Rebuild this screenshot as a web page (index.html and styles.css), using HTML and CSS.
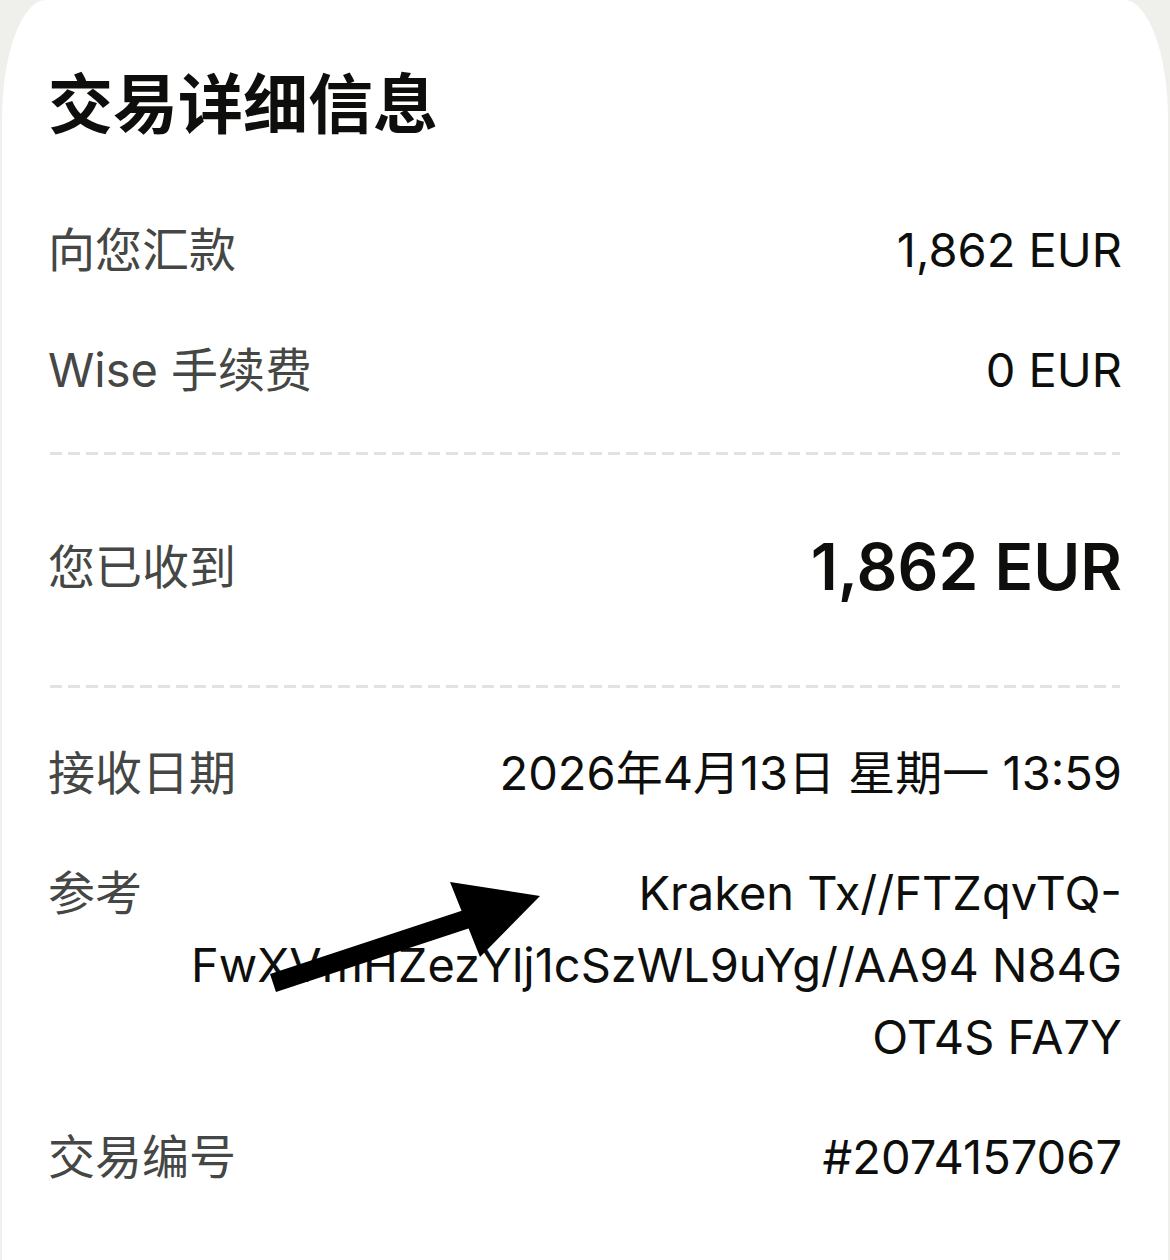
FILE: index.html
```html
<!DOCTYPE html>
<html>
<head>
	<title>交易详细信息</title>
	<meta charset="utf-8">
	<link rel="stylesheet" href="styles.css">
</head>
<body>
  <div class="card">
  	<h1 class="title">交易详细信息</h1>
  	<div class="row">
  		<div class="label">向您汇款</div>
  		<div class="value">1,862 EUR</div>
  	</div>
  	<div class="row">
  		<div class="label">Wise 手续费</div>
  		<div class="value">0 EUR</div>
  	</div>
  	<div class="divider"></div>
  	<div class="row total">
  		<div class="label">您已收到</div>
  		<div class="value">1,862 EUR</div>
  	</div>
  	<div class="divider"></div>
  	<div class="row">
  		<div class="label">接收日期</div>
  		<div class="value">2026年4月13日 星期一 13:59</div>
  	</div>
  	<div class="row">
  		<div class="label">参考</div>
  		<div class="value">Kraken Tx//FTZqvTQ-<br>FwXVmHZezYlj1cSzWL9uYg//AA94 N84G<br>OT4S FA7Y</div>
  	</div>
  	<div class="row">
  		<div class="label">交易编号</div>
  		<div class="value">#2074157067</div>
  	</div>
  	<svg class="arrow" width="600" height="1100" viewBox="0 0 600 1100">
  		<line x1="273" y1="983" x2="470" y2="918" stroke="#000" stroke-width="19"/>
  		<polygon points="450,882 540,896 480,957" fill="#000"/>
  	</svg>
  </div>
</body>
</html>
```

FILE: styles.css
```css
body {
	margin: 0;
	background: #efefec;
	font-family: Inter, "Noto Sans CJK SC", sans-serif;
}
.card {
	position: relative;
	min-height: 1300px;
	margin: 0 2px;
	padding: 0 46px;
	background: #fff;
	border-radius: 44px 44px 0 0 / 120px 120px 0 0;
}
.title {
	margin: 0 0 50px 0;
	padding-top: 60px;
	font-size: 65px;
	line-height: 80px;
	font-weight: 700;
	color: #0e0f0c;
	font-family: "Noto Sans CJK SC", sans-serif;
}
.row {
	display: flex;
	justify-content: space-between;
	align-items: flex-start;
	padding: 24px 0;
	font-size: 47px;
	line-height: 72px;
}
.label {
	color: #454745;
	white-space: nowrap;
}
.value {
	color: #0e0f0c;
	text-align: right;
	white-space: nowrap;
}
.total {
	padding: 51px 0 60px 0;
	align-items: center;
}
.total .value {
	font-size: 64px;
	font-weight: 600;
}
.divider {
	height: 3px;
	margin: 22px 2px 25px 2px;
	background: repeating-linear-gradient(90deg, #e2e2e0 0 12px, transparent 12px 18px);
}
.arrow {
	position: absolute;
	top: 0;
	left: -2px;
}
```
